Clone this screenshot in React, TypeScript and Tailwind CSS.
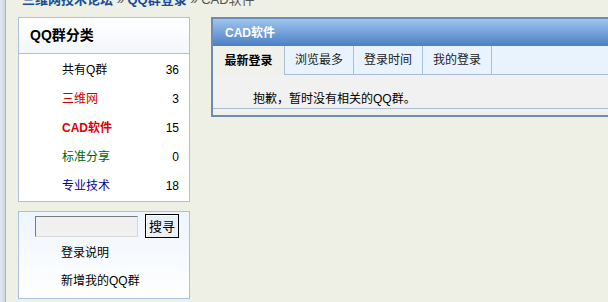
const font = { fontFamily: '"Liberation Sans", "Noto Sans CJK SC", sans-serif' };

const categories = [
  { name: "共有Q群", count: 36, cls: "text-black" },
  { name: "三维网", count: 3, cls: "text-[#cc0000]" },
  { name: "CAD软件", count: 15, cls: "text-[#e00000] font-bold" },
  { name: "标准分享", count: 0, cls: "text-[#006600]" },
  { name: "专业技术", count: 18, cls: "text-[#0000a0]" },
];

const tabs = ["最新登录", "浏览最多", "登录时间", "我的登录"];

export default function App() {
  return (
    <div
      className="flex w-[608px] h-[302px] overflow-hidden bg-[#eef0e6] text-[12px] text-black"
      style={font}
    >
      {/* window edge */}
      <div className="w-[6px] shrink-0 bg-gradient-to-r from-[#e4e8ef] to-[#cdd5e2] border-r border-[#a9b6ca]" />

      <div className="flex-1 min-w-0">
        {/* Breadcrumb, cut off at top */}
        <div className="h-[17px] overflow-hidden pl-[16px]">
          <div className="-mt-[8px] text-[13px] leading-[16px] whitespace-nowrap">
            <span className="font-bold text-[#1a4d99]">三维网技术论坛</span>
            <span className="text-[#555]"> » </span>
            <span className="font-bold text-[#1a4d99]">QQ群登录</span>
            <span className="text-[#555]"> » CAD软件</span>
          </div>
        </div>

        <div className="flex pl-[12px] gap-[21px]">
          {/* Sidebar */}
          <div className="w-[172px] shrink-0 flex flex-col gap-[9px]">
            <div className="border border-[#a9c1da] bg-white">
              <div className="h-[36px] flex items-center pl-[11px] border-b border-[#a9c1da] bg-gradient-to-b from-white to-[#f3f7fb] text-[14px] font-bold">
                QQ群分类
              </div>
              <div className="py-[1px]">
                {categories.map((c) => (
                  <div key={c.name} className="h-[29px] flex items-center justify-between pl-[43px] pr-[10px]">
                    <span className={c.cls}>{c.name}</span>
                    <span>{c.count}</span>
                  </div>
                ))}
              </div>
            </div>

            <div className="border border-[#a9c1da] bg-gradient-to-b from-[#eef5fd] to-white h-[88px]">
              <div className="flex items-center pl-[16px] pt-[2px] gap-[7px]">
                <div className="w-[103px] h-[21px] border border-[#7a7a7a] border-r-[#d8d8d8] border-b-[#d8d8d8] bg-[#f0f0f0]" />
                <button className="h-[24px] w-[34px] border border-black bg-[#eaf0f8] text-[13px] leading-none shadow-[inset_1px_1px_0_#fff]">
                  搜寻
                </button>
              </div>
              <div className="pl-[42px] h-[28px] flex items-center mt-[1px]">登录说明</div>
              <div className="pl-[42px] h-[28px] flex items-center">新增我的QQ群</div>
            </div>
          </div>

          {/* Main panel */}
          <div className="w-[410px] shrink-0 h-[100px] border-2 border-[#6b8db3] bg-[#eef1ee] flex flex-col">
            <div className="h-[27px] flex items-center pl-[12px] bg-gradient-to-b from-[#a0c4ee] to-[#4a80c4] text-white font-bold">
              CAD软件
            </div>
            <div className="flex h-[29px] bg-[#e8f3fe] border-b border-[#a8bdd5]">
              {tabs.map((t, i) => (
                <div
                  key={t}
                  className={
                    i === 0
                      ? "w-[72px] flex items-center justify-center font-bold bg-[#f1f1ec] -mb-[1px] border-r border-[#a9c0d9]"
                      : "w-[69px] flex items-center justify-center border-r border-[#a9c0d9] text-[#222]"
                  }
                >
                  {t}
                </div>
              ))}
            </div>
            <div className="h-[34px] bg-[#f1f1f1] border-b border-[#a9bcd4] pl-[40px] pt-[17px] leading-[14px]">
              抱歉，暂时没有相关的QQ群。
            </div>
          </div>
        </div>
      </div>
    </div>
  );
}
